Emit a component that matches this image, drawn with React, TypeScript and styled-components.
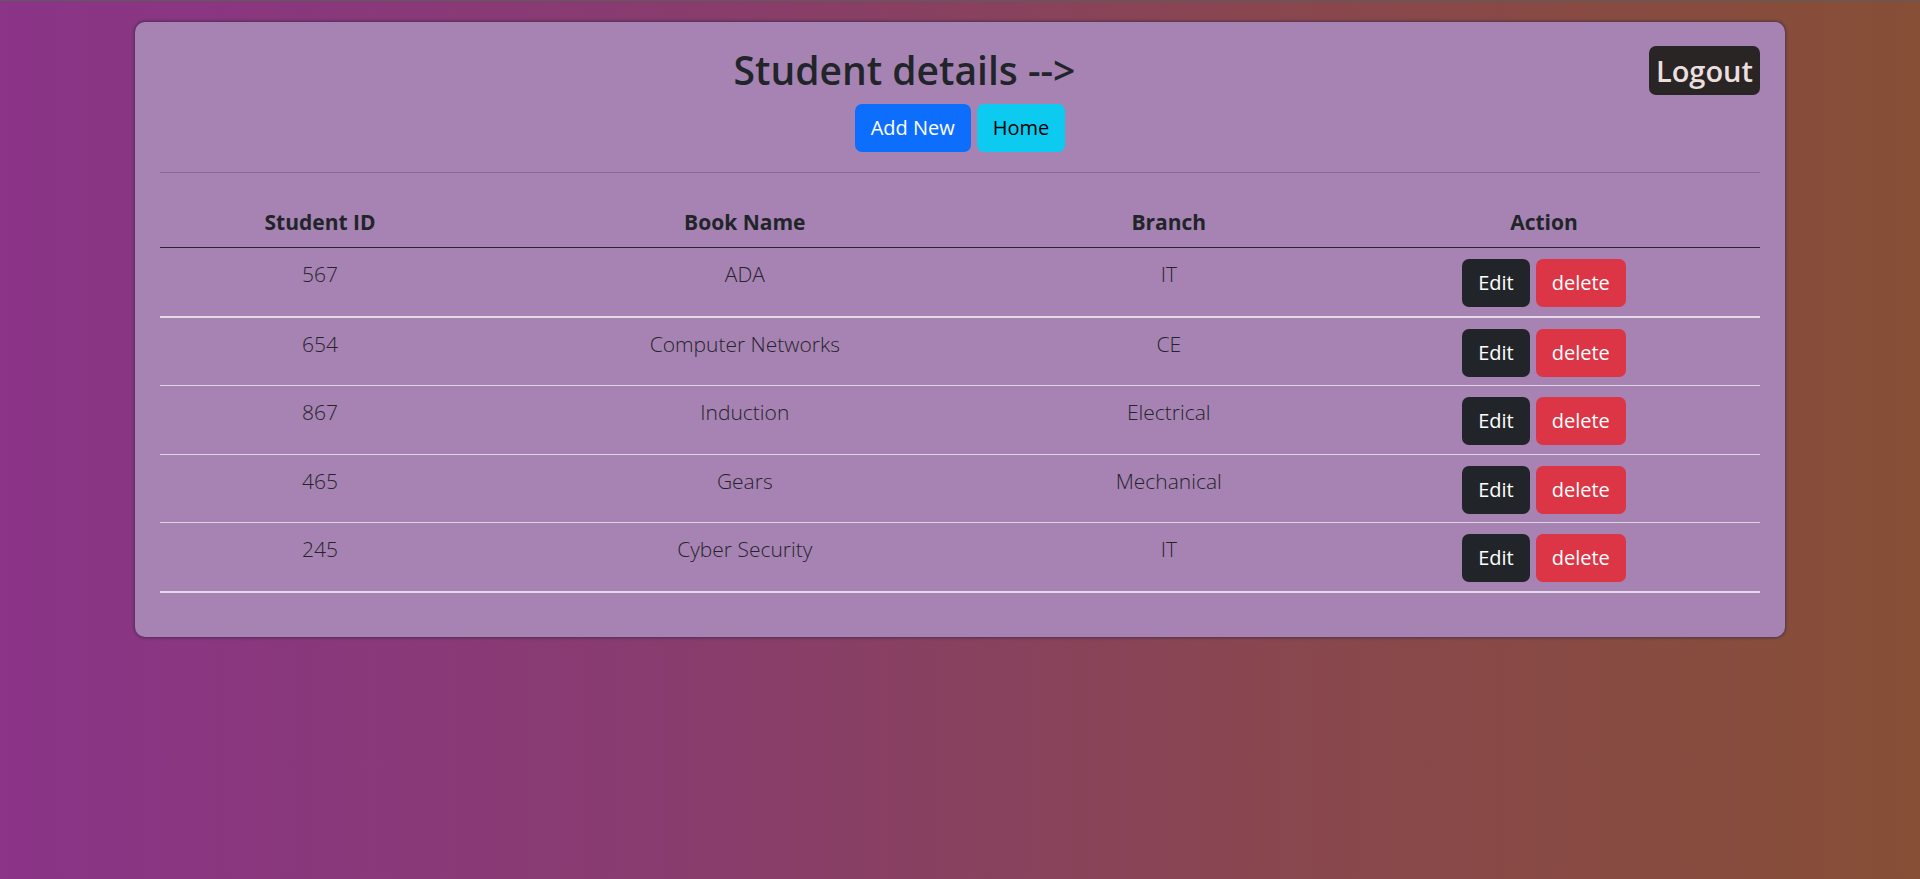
import React from "react";
import styled, { createGlobalStyle } from "styled-components";

const GlobalStyle = createGlobalStyle`
  html, body {
    margin: 0;
    padding: 0;
  }
  body {
    min-height: 100vh;
    background: linear-gradient(to right, #8b3488 0%, #883c6e 35%, #894650 65%, #874f36 100%);
    font-family: "Open Sans", "Noto Sans", sans-serif;
    color: #212529;
  }
`;

const Page = styled.div`
  border-top: 1px solid #5c5c5c;
  padding-top: 21px;
  min-height: 100vh;
  box-sizing: border-box;
`;

const Card = styled.div`
  box-sizing: border-box;
  width: 1650px;
  margin: 0 auto;
  padding: 24px 25px;
  background: #a683b2;
  border-radius: 10px;
  box-shadow: 0 0 3px 1px rgba(50, 40, 70, 0.65);
`;

const Header = styled.div`
  display: flex;
  align-items: flex-start;
`;

const Title = styled.h1`
  flex: 1;
  margin: 0 0 10px;
  text-align: center;
  font-size: 39px;
  font-weight: 600;
  line-height: 48px;
  color: #212529;
`;

const LogoutButton = styled.button`
  height: 49px;
  padding: 0 7px;
  border: none;
  border-radius: 7px;
  background: #292524;
  color: #eadede;
  font-family: inherit;
  font-size: 29px;
  font-weight: 600;
  line-height: 49px;
  cursor: pointer;
`;

const ButtonBar = styled.div`
  display: flex;
  justify-content: center;
  gap: 6px;
`;

const Btn = styled.button<{ $variant: "primary" | "info" | "dark" | "danger" }>`
  box-sizing: border-box;
  height: 48px;
  padding: 0 15px;
  border: 1px solid transparent;
  border-radius: 7px;
  font-family: inherit;
  font-size: 20px;
  font-weight: 400;
  line-height: 30px;
  cursor: pointer;
  background: ${({ $variant }) =>
    ({ primary: "#0d6efd", info: "#0dcaf0", dark: "#212529", danger: "#dc3545" })[
      $variant
    ]};
  color: ${({ $variant }) => ($variant === "info" ? "#000" : "#fff")};
`;

const Divider = styled.hr`
  margin: 20px 0 24px;
  border: 0;
  border-top: 1px solid rgba(33, 37, 41, 0.25);
`;

const Table = styled.table`
  width: 100%;
  border-collapse: collapse;
  margin-bottom: 20px;
  table-layout: fixed;
  font-size: 21px;
  line-height: 30px;
`;

const Th = styled.th`
  padding: 10px;
  font-weight: 700;
  text-align: center;
  border-bottom: 1px solid #2a2230;
`;

const Row = styled.tr<{ $thick: boolean }>`
  border-bottom: ${({ $thick }) => ($thick ? "2px solid #e4dae8" : "1px solid #ddd5e2")};
`;

const Td = styled.td`
  padding: 11px 10px 8.5px;
  text-align: center;
  vertical-align: top;
  font-weight: 300;
  color: #27232d;
`;

const Actions = styled.div`
  display: flex;
  justify-content: center;
  gap: 6px;
`;

const columns = [
  { label: "Student ID", width: "20%" },
  { label: "Book Name", width: "33.1%" },
  { label: "Branch", width: "19.9%" },
  { label: "Action", width: "27%" },
];

const students = [
  { id: 567, book: "ADA", branch: "IT" },
  { id: 654, book: "Computer Networks", branch: "CE" },
  { id: 867, book: "Induction", branch: "Electrical" },
  { id: 465, book: "Gears", branch: "Mechanical" },
  { id: 245, book: "Cyber Security", branch: "IT" },
];

const App = () => {
  return (
    <Page>
      <GlobalStyle />
      <Card>
        <Header>
          <Title>Student details --&gt;</Title>
          <LogoutButton>Logout</LogoutButton>
        </Header>
        <ButtonBar>
          <Btn $variant="primary">Add New</Btn>
          <Btn $variant="info">Home</Btn>
        </ButtonBar>
        <Divider />
        <Table>
          <colgroup>
            {columns.map((c) => (
              <col key={c.label} style={{ width: c.width }} />
            ))}
          </colgroup>
          <thead>
            <tr>
              {columns.map((c) => (
                <Th key={c.label}>{c.label}</Th>
              ))}
            </tr>
          </thead>
          <tbody>
            {students.map((s, i) => (
              <Row key={s.id} $thick={i === 0 || i === students.length - 1}>
                <Td>{s.id}</Td>
                <Td>{s.book}</Td>
                <Td>{s.branch}</Td>
                <Td>
                  <Actions>
                    <Btn $variant="dark">Edit</Btn>
                    <Btn $variant="danger">delete</Btn>
                  </Actions>
                </Td>
              </Row>
            ))}
          </tbody>
        </Table>
      </Card>
    </Page>
  );
};

export default App;
